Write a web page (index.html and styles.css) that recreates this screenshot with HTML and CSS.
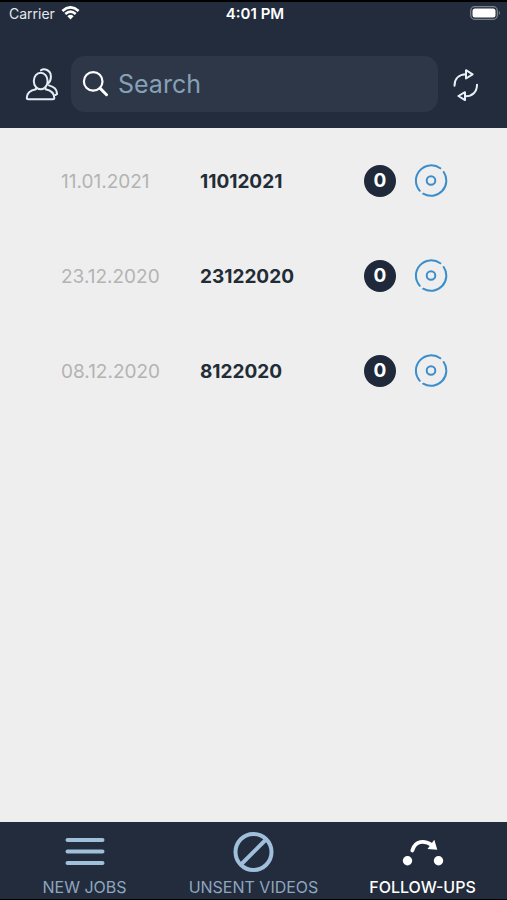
FILE: index.html
```html
<!DOCTYPE html>
<html lang="en">
<head>
<meta charset="utf-8">
<meta name="viewport" content="width=device-width, initial-scale=1">
<title>Follow-ups</title>
<link rel="stylesheet" href="styles.css">
</head>
<body>
<div class="app">
  <header class="header">
    <div class="status">
      <div class="carrier">
        <span>Carrier</span>
        <svg width="19" height="14" viewBox="0 0 18 14" fill="none" stroke="#fff" stroke-width="2.600">
          <path d="M.9 5Q9-2.300 17.100 5M3.800 8Q9 3.400 14.200 8"/>
          <path d="M5.900 10.200Q9 7.500 12.100 10.200L9 13.400z" fill="#fff" stroke="none"/>
        </svg>
      </div>
      <div class="clock">4:01 PM</div>
      <div class="battery">
        <svg width="31" height="14" viewBox="0 0 31 14">
          <rect x=".7" y=".7" width="26.600" height="12.600" rx="4" fill="none" stroke="#7b828c" stroke-width="1.300"/>
          <rect x="2.500" y="2.500" width="23" height="9" rx="2.500" fill="#fff"/>
          <path d="M28.800 4.800q2.400 2.200 0 4.400z" fill="#7b828c"/>
        </svg>
      </div>
    </div>
    <div class="toolbar">
      <button class="icon-button" type="button" aria-label="Contacts">
        <svg width="34" height="34" viewBox="0 0 34 34" fill="none" stroke="#e3edf5" stroke-width="2" stroke-linecap="round" stroke-linejoin="round">
          <ellipse cx="16.700" cy="14" rx="6.900" ry="8.300"/>
          <path d="M12 21v1.300C6.500 23.200 3 25.700 2.800 30.700q0 1.500 1.500 1.500h24.500q1.500 0 1.500-1.500c-.2-4.800-3.500-7.400-8.800-8.500V21"/>
          <path d="M17 3.300c3-2.300 9.700-.5 9.900 6 .1 3.200-1 5.500-2.800 7.200M25 18.400c5.300 1.400 8.200 4 8 8.800l-1.700.8"/>
        </svg>
      </button>
      <label class="search">
        <svg width="26" height="26" viewBox="0 0 26 26" fill="none" stroke="#fff" stroke-width="2.200" stroke-linecap="round">
          <circle cx="11.200" cy="10.400" r="9.300"/>
          <path d="M18.200 17.400l6.300 6.300" stroke-width="2.900"/>
        </svg>
        <input type="search" placeholder="Search" aria-label="Search">
      </label>
      <button class="icon-button" type="button" aria-label="Refresh">
        <svg width="28" height="34" viewBox="0 0 28 34" fill="none" stroke="#e8f0f7" stroke-width="2" stroke-linecap="round" stroke-linejoin="round">
          <path d="M3.500 18.700C3.500 11.500 8 7.500 15 7.300M26 17.800c0 7.200-4.700 11.600-11.500 11.500"/>
          <path d="M15 3.200v8.300l6.600-4.200zM14 25.200v7.900L7.400 29z"/>
        </svg>
      </button>
    </div>
  </header>

  <main class="content">
    <ul class="jobs">
      <li class="job">
        <time class="date" datetime="2021-01-11">11.01.2021</time>
        <span class="number">11012021</span>
        <span class="count">0</span>
        <button class="record" type="button" aria-label="Record 11012021">
          <svg width="34" height="34" viewBox="0 0 34 34" fill="none" stroke="#3c8dcb" stroke-width="2" stroke-linecap="round">
            <circle cx="17" cy="16.500" r="4.300"/>
            <path d="M26.300 4.300A15.300 15.300 0 0 0 5.800 26.800M29.700 8A15.300 15.300 0 0 1 9.200 29.700"/>
          </svg>
        </button>
      </li>
      <li class="job">
        <time class="date" datetime="2020-12-23">23.12.2020</time>
        <span class="number">23122020</span>
        <span class="count">0</span>
        <button class="record" type="button" aria-label="Record 23122020">
          <svg width="34" height="34" viewBox="0 0 34 34" fill="none" stroke="#3c8dcb" stroke-width="2" stroke-linecap="round">
            <circle cx="17" cy="16.500" r="4.300"/>
            <path d="M26.300 4.300A15.300 15.300 0 0 0 5.800 26.800M29.700 8A15.300 15.300 0 0 1 9.200 29.700"/>
          </svg>
        </button>
      </li>
      <li class="job">
        <time class="date" datetime="2020-12-08">08.12.2020</time>
        <span class="number">8122020</span>
        <span class="count">0</span>
        <button class="record" type="button" aria-label="Record 8122020">
          <svg width="34" height="34" viewBox="0 0 34 34" fill="none" stroke="#3c8dcb" stroke-width="2" stroke-linecap="round">
            <circle cx="17" cy="16.500" r="4.300"/>
            <path d="M26.300 4.300A15.300 15.300 0 0 0 5.800 26.800M29.700 8A15.300 15.300 0 0 1 9.200 29.700"/>
          </svg>
        </button>
      </li>
    </ul>
  </main>

  <nav class="tabs">
    <a class="tab" href="#new-jobs">
      <svg width="42" height="42" viewBox="0 0 42 42" fill="none" stroke="#9fbfdb" stroke-width="4" stroke-linecap="round">
        <path d="M3.500 9h35M3.500 20.500h35M3.500 32h35"/>
      </svg>
      <span>NEW JOBS</span>
    </a>
    <a class="tab" href="#unsent-videos">
      <svg width="42" height="42" viewBox="0 0 42 42" fill="none" stroke="#9fbfdb" stroke-width="4">
        <circle cx="20.500" cy="21" r="18"/>
        <path d="M8 33.500l25-25"/>
      </svg>
      <span>UNSENT VIDEOS</span>
    </a>
    <a class="tab active" href="#follow-ups" aria-current="page">
      <svg width="42" height="42" viewBox="0 0 42 42" fill="#fff">
        <circle cx="5.500" cy="29.700" r="4.700"/>
        <circle cx="36.500" cy="29.700" r="4.700"/>
        <path d="M10.300 19.500C13 10 22 8.500 30.500 14.500" fill="none" stroke="#fff" stroke-width="3.800" stroke-linecap="round"/>
        <path d="M32.300 8.800l3 10-9.800-.8z"/>
      </svg>
      <span>FOLLOW-UPS</span>
    </a>
  </nav>
</div>
</body>
</html>
```
FILE: styles.css
```css
* {
  box-sizing: border-box;
}

body {
  margin: 0;
  background: #eee;
  font-family: Inter, "Liberation Sans", sans-serif;
}

svg {
  display: block;
  flex: none;
}

button {
  padding: 0;
  border: 0;
  background: none;
  cursor: pointer;
}

.app {
  display: flex;
  flex-direction: column;
  min-height: 100vh;
}

.header {
  padding-bottom: 16px;
  border-top: 2px solid #000;
  background: #222c3c;
}

.status {
  display: grid;
  grid-template-columns: 1fr auto 1fr;
  align-items: center;
  height: 22px;
  padding: 0 6px 0 9px;
  color: #fff;
  font-size: 14px;
}

.carrier {
  display: flex;
  align-items: center;
  gap: 6px;
  color: #e4e8ec;
}

.clock {
  font-size: 15px;
  font-weight: 600;
}

.battery {
  justify-self: end;
}

.toolbar {
  display: flex;
  align-items: center;
  gap: 13px;
  margin-top: 32px;
  padding: 0 28px 0 24px;
}

.search {
  display: flex;
  flex: 1;
  align-items: center;
  gap: 10px;
  min-width: 0;
  height: 56px;
  padding: 0 11px;
  border-radius: 14px;
  background: #2d3747;
}

.search input {
  flex: 1;
  min-width: 0;
  padding: 0;
  border: 0;
  outline: 0;
  background: none;
  color: #fff;
  font: 400 25px/32px Inter, "Liberation Sans", sans-serif;
}

.search input::placeholder {
  color: #86a0b8;
  opacity: 1;
}

.content {
  flex: 1;
}

.jobs {
  margin: 0;
  padding: 5px 0;
  list-style: none;
}

.job {
  display: grid;
  grid-template-columns: 139px 1fr 50px 34px;
  align-items: center;
  height: 95px;
  padding: 0 59px 0 61px;
  font-size: 19px;
}

.date,
.number {
  padding-top: 2px;
}

.date {
  color: #b3b3b3;
}

.number {
  color: #222c36;
  font-weight: 700;
}

.count {
  width: 32px;
  height: 32px;
  border-radius: 50%;
  background: #1f293a;
  color: #fff;
  font-weight: 700;
  line-height: 32px;
  text-align: center;
}

.tabs {
  display: grid;
  grid-template-columns: repeat(3, 1fr);
  padding: 9px 0 2px;
  border-bottom: 1px solid #000;
  background: #222c3c;
}

.tab {
  display: flex;
  flex-direction: column;
  align-items: center;
  gap: 4px;
  color: #8ea6bf;
  font-size: 16px;
  line-height: 20px;
  text-decoration: none;
}

.active {
  color: #fff;
  font-weight: 500;
}
```
